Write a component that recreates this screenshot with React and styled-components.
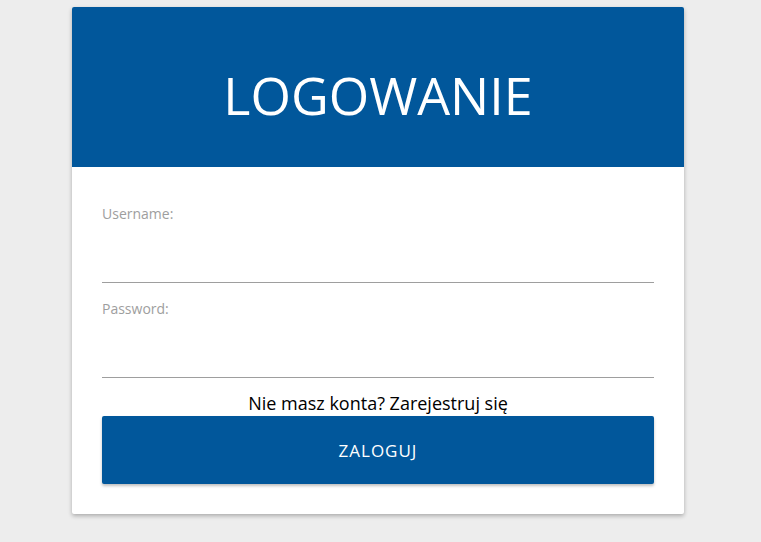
import React from "react";
import styled, { createGlobalStyle } from "styled-components";

const GlobalStyle = createGlobalStyle`
  html, body {
    margin: 0;
    padding: 0;
    background: #ededed;
    font-family: "Open Sans", "Liberation Sans", sans-serif;
  }
`;

const Page = styled.div`
  min-height: 542px;
  padding: 7px 5px 0 0;
  box-sizing: border-box;
`;

const Card = styled.div`
  width: 612px;
  margin: 0 auto;
  background: #fff;
  border-radius: 2px;
  box-shadow: 0 2px 4px rgba(0, 0, 0, 0.28);
  overflow: hidden;
`;

const Header = styled.div`
  height: 160px;
  background: #01579b;
  display: flex;
  align-items: center;
  justify-content: center;
`;

const Title = styled.h1`
  margin: 0;
  color: #fff;
  font-size: 52px;
  font-weight: 400;
  padding-top: 15px;
`;

const Form = styled.form`
  padding: 37px 30px 30px;
  display: flex;
  flex-direction: column;
`;

const Field = styled.label`
  display: flex;
  flex-direction: column;
  margin-bottom: ${(p) => p.gap || 0}px;
`;

const Label = styled.span`
  font-size: 14px;
  line-height: 20px;
  color: #9e9e9e;
`;

const Input = styled.input`
  height: 58px;
  border: none;
  border-bottom: 1px solid #9e9e9e;
  outline: none;
  font: inherit;
  font-size: 16px;
  padding: 0;
  background: transparent;
`;

const Register = styled.p`
  margin: 13px 0 1px;
  text-align: center;
  font-size: 18px;
  line-height: 24px;
  color: #000;
`;

const Button = styled.button`
  height: 68px;
  border: none;
  border-radius: 2px;
  background: #01579b;
  color: #fff;
  font-family: inherit;
  font-size: 17px;
  letter-spacing: 1px;
  text-transform: uppercase;
  box-shadow: 0 2px 3px rgba(0, 0, 0, 0.25);
  cursor: pointer;
`;

export default function App() {
  return (
    <>
      <GlobalStyle />
      <Page>
        <Card>
          <Header>
            <Title>LOGOWANIE</Title>
          </Header>
          <Form onSubmit={(e) => e.preventDefault()}>
            <Field gap={16}>
              <Label>Username:</Label>
              <Input type="text" />
            </Field>
            <Field>
              <Label>Password:</Label>
              <Input type="password" />
            </Field>
            <Register>Nie masz konta? Zarejestruj się</Register>
            <Button type="submit">Zaloguj</Button>
          </Form>
        </Card>
      </Page>
    </>
  );
}
